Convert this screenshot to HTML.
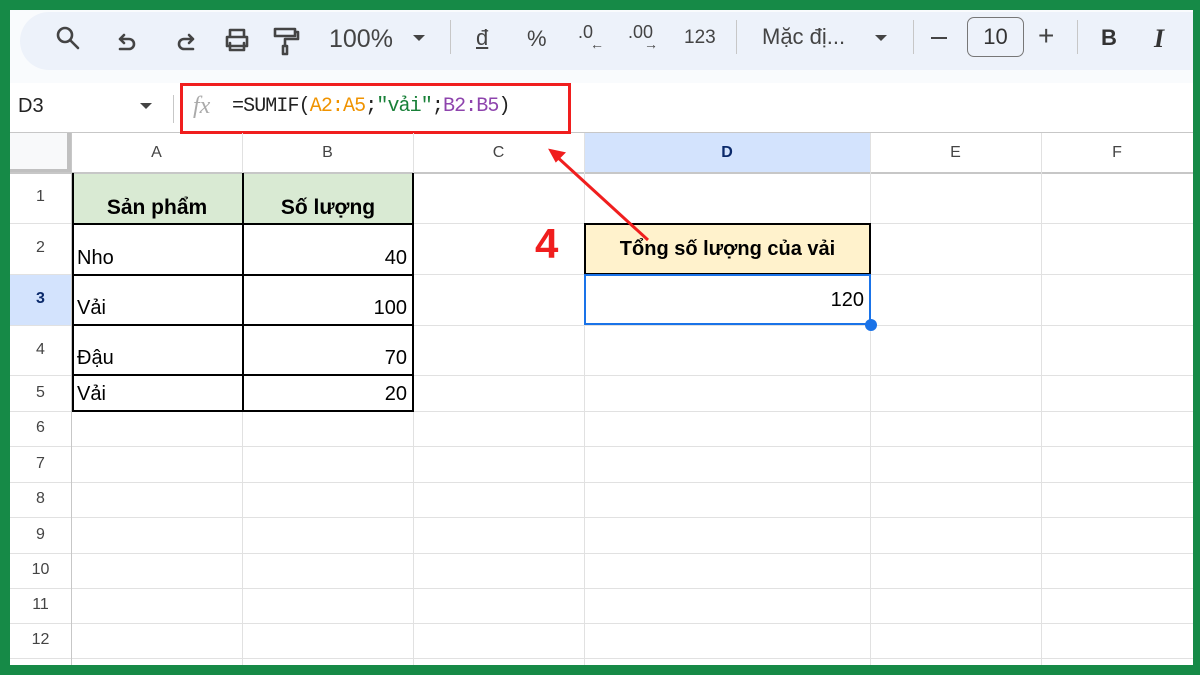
<!DOCTYPE html>
<html><head><meta charset="utf-8"><style>
*{margin:0;padding:0;box-sizing:border-box}
body{width:1200px;height:675px;background:#168a47;position:relative;overflow:hidden;font-family:"Liberation Sans",Arial,sans-serif}
.a{position:absolute}
.main{left:10px;top:10px;width:1183px;height:655px;background:#fff;overflow:hidden}
.t{color:#444;font-size:22px}
.hl{position:absolute;background:#e1e1e1}
.ch{position:absolute;top:133px;height:40px;line-height:40px;text-align:center;font-size:16px;color:#444}
.rh{position:absolute;left:10px;width:61px;text-align:center;font-size:16px;color:#444}
.c{position:absolute;font-size:20px;color:#000}
</style></head><body>
<div class="a main"></div>
<div class="a" style="left:10px;top:10px;width:1183px;height:73px;background:#f9fbfd"></div>
<div class="a" style="left:20px;top:12px;width:1173px;height:58px;background:#edf2fa;border-radius:29px 0 0 29px"></div>
<svg class="a" style="left:40px;top:15px" width="280" height="50" viewBox="0 0 280 50" fill="none" stroke="#444" stroke-width="2.6" stroke-linecap="round" stroke-linejoin="round">
<circle cx="25" cy="20" r="7"/><path d="M30 25l8 8"/>
<path d="M80 24h9a5 5 0 010 10h-9M80 24l4-4M80 24l4 4" />
<path d="M153 24h-9a5 5 0 000 10h9M153 24l-4-4M153 24l-4 4"/>
<path d="M187 31v-9h20v9zM190 22v-7h14v7M190 28v7h14v-7"/>
<path d="M235 14h20v7h-20zM255 17h3v7h-13v7M243 31h4v8h-4z"/>
</svg>
<div class="a t" style="left:329px;top:25px;font-size:25px">100%</div>
<div class="a" style="left:413px;top:35px;border-left:6px solid transparent;border-right:6px solid transparent;border-top:6px solid #444"></div>
<div class="a" style="left:450px;top:20px;width:1px;height:34px;background:#c7c7c7"></div>
<div class="a t" style="left:476px;top:25px;text-decoration:underline">đ</div>
<div class="a t" style="left:527px;top:26px">%</div>
<div class="a t" style="left:578px;top:22px;font-size:18px">.0</div>
<div class="a t" style="left:590px;top:36px;font-size:14px">←</div>
<div class="a t" style="left:628px;top:22px;font-size:18px">.00</div>
<div class="a t" style="left:644px;top:36px;font-size:14px">→</div>
<div class="a t" style="left:684px;top:27px;font-size:19px">123</div>
<div class="a" style="left:736px;top:20px;width:1px;height:34px;background:#c7c7c7"></div>
<div class="a t" style="left:762px;top:24px">Mặc đị...</div>
<div class="a" style="left:875px;top:35px;border-left:6px solid transparent;border-right:6px solid transparent;border-top:6px solid #444"></div>
<div class="a" style="left:913px;top:20px;width:1px;height:34px;background:#c7c7c7"></div>
<div class="a" style="left:931px;top:37px;width:16px;height:2px;background:#444"></div>
<div class="a" style="left:967px;top:17px;width:57px;height:40px;border:1.5px solid #777;border-radius:7px;text-align:center;line-height:38px;font-size:22px;color:#333">10</div>
<div class="a t" style="left:1038px;top:20px;font-size:28px">+</div>
<div class="a" style="left:1077px;top:20px;width:1px;height:34px;background:#c7c7c7"></div>
<div class="a t" style="left:1101px;top:25px;font-weight:bold;color:#333">B</div>
<div class="a t" style="left:1154px;top:24px;font-family:'Liberation Serif',serif;font-style:italic;font-weight:bold;font-size:26px;color:#333">I</div>
<div class="a" style="left:10px;top:132px;width:1183px;height:1px;background:#c7c7c7"></div>
<div class="a" style="left:18px;top:95px;font-size:20px;color:#222">D3</div>
<div class="a" style="left:140px;top:103px;border-left:6px solid transparent;border-right:6px solid transparent;border-top:6px solid #444"></div>
<div class="a" style="left:173px;top:95px;width:1px;height:28px;background:#c7c7c7"></div>
<div class="a" style="left:193px;top:93px;font-family:'Liberation Serif',serif;font-style:italic;font-size:24px;color:#aaa">fx</div>
<div class="a" style="left:232px;top:95px;font-family:'Liberation Mono',monospace;font-size:20px;color:#222;letter-spacing:-0.9px">=SUMIF(<span style="color:#f09300">A2:A5</span>;<span style="color:#188038">"vải"</span>;<span style="color:#8e44ad">B2:B5</span>)</div>
<div class="a" style="left:180px;top:83px;width:391px;height:51px;border:3px solid #f01e1e"></div>
<div class="a" style="left:10px;top:133px;width:61px;height:40px;background:#f8f9fa;border-right:4px solid #c0c0c0;border-bottom:4px solid #c0c0c0"></div>
<div class="a" style="left:584px;top:133px;width:286px;height:40px;background:#d3e3fd"></div>
<div class="a" style="left:10px;top:274px;width:61px;height:51px;background:#d3e3fd"></div>
<div class="ch" style="left:71px;width:171px">A</div>
<div class="ch" style="left:242px;width:171px">B</div>
<div class="ch" style="left:413px;width:171px">C</div>
<div class="ch" style="left:584px;width:286px;color:#0b2a6b;font-weight:bold">D</div>
<div class="ch" style="left:870px;width:171px">E</div>
<div class="ch" style="left:1041px;width:152px">F</div>
<div class="hl" style="left:10px;top:172px;width:1183px;height:2px;background:#c7c7c7"></div>
<div class="hl" style="left:10px;top:223px;width:1183px;height:1px"></div>
<div class="hl" style="left:10px;top:274px;width:1183px;height:1px"></div>
<div class="hl" style="left:10px;top:325px;width:1183px;height:1px"></div>
<div class="hl" style="left:10px;top:375px;width:1183px;height:1px"></div>
<div class="hl" style="left:10px;top:411px;width:1183px;height:1px"></div>
<div class="hl" style="left:10px;top:446px;width:1183px;height:1px"></div>
<div class="hl" style="left:10px;top:482px;width:1183px;height:1px"></div>
<div class="hl" style="left:10px;top:517px;width:1183px;height:1px"></div>
<div class="hl" style="left:10px;top:553px;width:1183px;height:1px"></div>
<div class="hl" style="left:10px;top:588px;width:1183px;height:1px"></div>
<div class="hl" style="left:10px;top:623px;width:1183px;height:1px"></div>
<div class="hl" style="left:10px;top:658px;width:1183px;height:1px"></div>
<div class="hl" style="left:71px;top:133px;width:1px;height:532px;background:#c7c7c7"></div>
<div class="hl" style="left:242px;top:133px;width:1px;height:532px"></div>
<div class="hl" style="left:413px;top:133px;width:1px;height:532px"></div>
<div class="hl" style="left:584px;top:133px;width:1px;height:532px"></div>
<div class="hl" style="left:870px;top:133px;width:1px;height:532px"></div>
<div class="hl" style="left:1041px;top:133px;width:1px;height:532px"></div>
<div class="rh" style="top:188px">1</div>
<div class="rh" style="top:239px">2</div>
<div class="rh" style="top:290px;color:#0b2a6b;font-weight:bold">3</div>
<div class="rh" style="top:341px">4</div>
<div class="rh" style="top:384px">5</div>
<div class="rh" style="top:419px">6</div>
<div class="rh" style="top:455px">7</div>
<div class="rh" style="top:490px">8</div>
<div class="rh" style="top:526px">9</div>
<div class="rh" style="top:561px">10</div>
<div class="rh" style="top:596px">11</div>
<div class="rh" style="top:631px">12</div>
<div class="a" style="left:72px;top:174px;width:341px;height:49px;background:#d9ead3"></div>
<div class="a" style="left:72px;top:173px;width:342px;height:239px;border:2px solid #000;border-top:none"></div>
<div class="a" style="left:242px;top:173px;width:2px;height:239px;background:#000"></div>
<div class="a" style="left:72px;top:223px;width:342px;height:2px;background:#000"></div>
<div class="a" style="left:72px;top:274px;width:342px;height:2px;background:#000"></div>
<div class="a" style="left:72px;top:324px;width:342px;height:2px;background:#000"></div>
<div class="a" style="left:72px;top:374px;width:342px;height:2px;background:#000"></div>
<div class="c" style="left:72px;width:170px;top:196px;text-align:center;font-weight:bold;font-size:21px">Sản phẩm</div>
<div class="c" style="left:243px;width:170px;top:196px;text-align:center;font-weight:bold;font-size:21px">Số lượng</div>
<div class="c" style="left:77px;top:247px">Nho</div>
<div class="c" style="left:77px;top:297px">Vải</div>
<div class="c" style="left:77px;top:347px">Đậu</div>
<div class="c" style="left:77px;top:383px">Vải</div>
<div class="c" style="left:243px;width:164px;top:247px;text-align:right">40</div>
<div class="c" style="left:243px;width:164px;top:297px;text-align:right">100</div>
<div class="c" style="left:243px;width:164px;top:347px;text-align:right">70</div>
<div class="c" style="left:243px;width:164px;top:383px;text-align:right">20</div>
<div class="a" style="left:584px;top:223px;width:287px;height:52px;background:#fff2cc;border:2px solid #000"></div>
<div class="c" style="left:584px;width:287px;top:238px;text-align:center;font-weight:bold">Tổng số lượng của vải</div>
<div class="a" style="left:584px;top:274px;width:287px;height:51px;border:2.5px solid #1a73e8"></div>
<div class="c" style="left:584px;width:280px;top:289px;text-align:right">120</div>
<div class="a" style="left:865px;top:319px;width:12px;height:12px;border-radius:50%;background:#1a73e8"></div>
<div class="a" style="left:535px;top:220px;font-size:42px;font-weight:bold;color:#f01e1e">4</div>
<svg class="a" style="left:0;top:0" width="1200" height="675"><path d="M648 240L555 155" stroke="#f01e1e" stroke-width="3"/><path d="M550 150l14 3-8 8z" fill="#f01e1e" stroke="#f01e1e" stroke-width="2"/></svg>
</body></html>
